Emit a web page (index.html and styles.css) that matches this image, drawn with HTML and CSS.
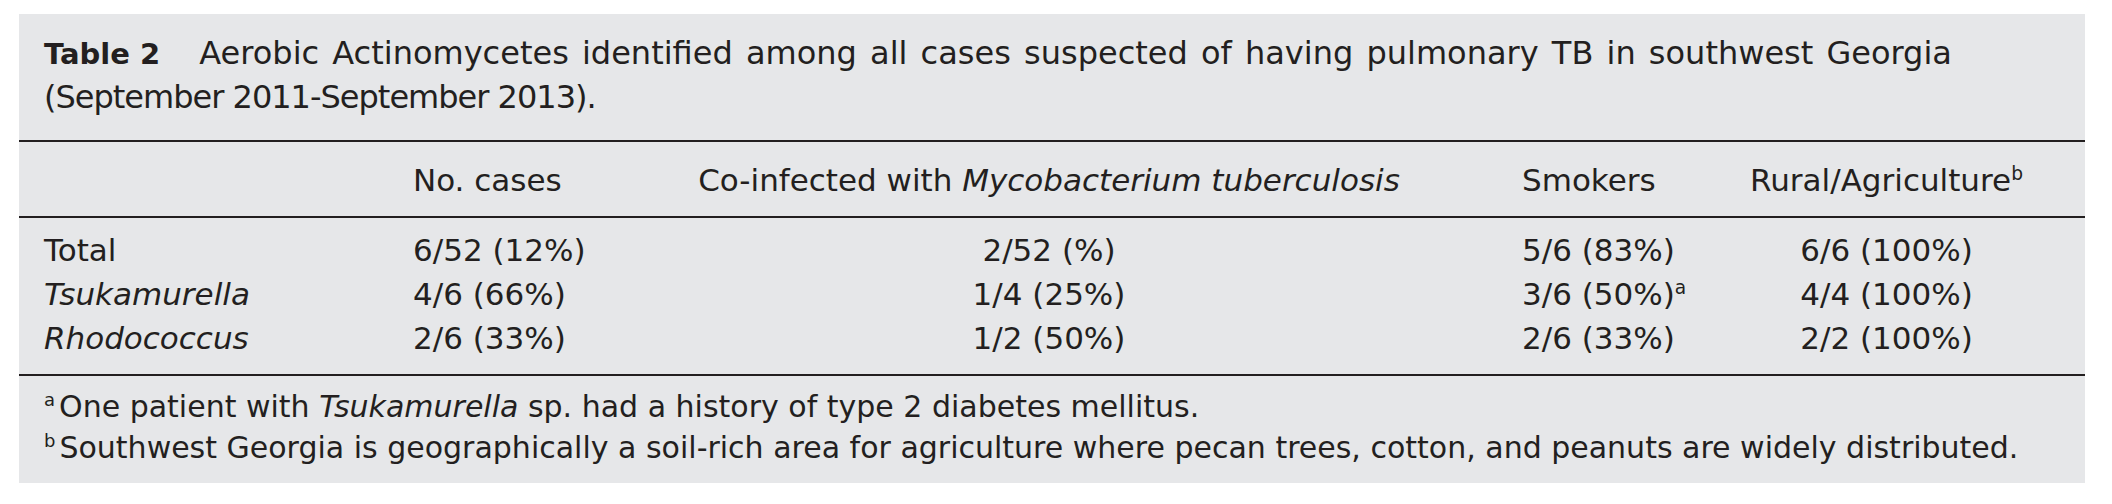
FILE: index.html
```html
<!DOCTYPE html>
<html lang="en">
<head>
  <meta charset="UTF-8" />
  <title>Table 2</title>
  <link rel="stylesheet" href="styles.css">
</head>
<body>
  <div class="table-box">
    <div class="caption">
      <span class="label">Table 2</span><span class="title">Aerobic Actinomycetes identified among all cases suspected of having pulmonary TB in southwest Georgia</span><br><span class="dates">(September 2011-September 2013).</span>
    </div>

    <table class="data">
      <colgroup>
        <col class="c-name">
        <col class="c-cases">
        <col class="c-coinf">
        <col class="c-smoke">
        <col class="c-rural">
      </colgroup>
      <thead>
        <tr>
          <th></th>
          <th>No. cases</th>
          <th class="center">Co-infected with <i>Mycobacterium tuberculosis</i></th>
          <th class="smoke">Smokers</th>
          <th class="rural">Rural/Agriculture<sup>b</sup></th>
        </tr>
      </thead>
      <tbody>
        <tr>
          <td>Total</td>
          <td>6/52 (12%)</td>
          <td class="center">2/52 (%)</td>
          <td class="smoke">5/6 (83%)</td>
          <td class="rural">6/6 (100%)</td>
        </tr>
        <tr>
          <td><i>Tsukamurella</i></td>
          <td>4/6 (66%)</td>
          <td class="center">1/4 (25%)</td>
          <td class="smoke">3/6 (50%)<sup>a</sup></td>
          <td class="rural">4/4 (100%)</td>
        </tr>
        <tr>
          <td><i>Rhodococcus</i></td>
          <td>2/6 (33%)</td>
          <td class="center">1/2 (50%)</td>
          <td class="smoke">2/6 (33%)</td>
          <td class="rural">2/2 (100%)</td>
        </tr>
      </tbody>
    </table>

    <div class="notes">
      <p><sup>a</sup>One patient with <i>Tsukamurella</i> sp. had a history of type 2 diabetes mellitus.</p>
      <p><sup>b</sup>Southwest Georgia is geographically a soil-rich area for agriculture where pecan trees, cotton, and peanuts are widely distributed.</p>
    </div>
  </div>
</body>
</html>
```

FILE: styles.css
```css
body {
  margin: 0;
  padding: 14px 0 0 19px;
  background: #fff;
  font-family: 'DejaVu Sans', sans-serif;
  color: #231f20;
}

.table-box {
  background: #e6e7e9;
  width: 2066px;
  height: 469px;
}

.caption {
  font-size: 32px;
  line-height: 43px;
  padding: 18px 40px 21px 25px;
  white-space: nowrap;
}

.caption .label {
  font-size: 29px;
  font-weight: bold;
  margin-right: 39px;
}

.caption .title {
  word-spacing: 3px;
}

.caption .dates {
  letter-spacing: -1px;
}

.data {
  width: 2066px;
  table-layout: fixed;
  border-collapse: collapse;
  border-top: 2px solid #231f20;
  border-bottom: 2px solid #231f20;
  font-size: 31px;
  line-height: 44px;
}

.c-name { width: 394px; }
.c-cases { width: 277px; }
.c-coinf { width: 718px; }
.c-smoke { width: 337px; }
.c-rural { width: 340px; }

.data th,
.data td {
  padding: 0;
  font-weight: normal;
  text-align: left;
  white-space: nowrap;
  vertical-align: baseline;
}

.data th:first-child,
.data td:first-child {
  padding-left: 25px;
}

.data thead th {
  padding-top: 16px;
  padding-bottom: 14px;
  border-bottom: 2px solid #231f20;
}

.data tbody tr:first-child td {
  padding-top: 10px;
}

.data tbody tr:last-child td {
  padding-bottom: 14px;
}

.data .center {
  text-align: center;
}

.data .smoke {
  padding-left: 114px;
}

.data .rural {
  text-align: center;
  padding-right: 57px;
}

sup {
  font-size: 60%;
  line-height: 0;
  vertical-align: 0.6em;
}

.notes {
  font-size: 30px;
  line-height: 41px;
  padding: 10px 0 0 25px;
}

.notes p {
  margin: 0;
}

.notes sup {
  margin-right: 4px;
}
```
